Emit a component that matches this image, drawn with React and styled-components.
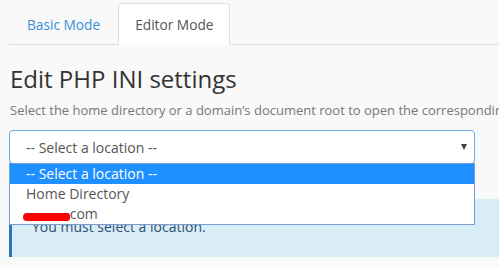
import React from "react";
import styled, { createGlobalStyle } from "styled-components";

const GlobalStyle = createGlobalStyle`
  html, body {
    margin: 0;
    padding: 0;
    background: #f9f9f9;
    font-family: "Open Sans", "Liberation Sans", sans-serif;
    overflow: hidden;
  }
`;

const Page = styled.div`
  width: 499px;
  height: 267px;
  padding-left: 9px;
  box-sizing: border-box;
  overflow: hidden;
`;

const Tabs = styled.div`
  display: flex;
  padding-top: 3px;
  border-bottom: 1px solid #ddd;
  margin-right: -20px;
`;

const Tab = styled.div`
  height: 42px;
  padding: 0 ${(p) => (p.active ? 16 : 17)}px;
  display: flex;
  align-items: center;
  font-size: 13.7px;
  box-sizing: border-box;
  margin-bottom: -1px;
  border: 1px solid ${(p) => (p.active ? "#ddd" : "transparent")};
  border-bottom-color: ${(p) => (p.active ? "#fff" : "transparent")};
  border-radius: 4px 4px 0 0;
  background: ${(p) => (p.active ? "#fff" : "transparent")};
  color: ${(p) => (p.active ? "#555" : "#3b8fd9")};
`;

const Title = styled.h1`
  margin: 16px 0 0 1px;
  font-size: 24px;
  font-weight: 400;
  color: #333;
  line-height: 36px;
`;

const Help = styled.p`
  margin: 3px 0 0 1px;
  font-size: 13px;
  color: #777;
  white-space: nowrap;
  line-height: 20px;
`;

const Field = styled.div`
  position: relative;
  margin-top: 10px;
  width: 466px;
`;

const Select = styled.div`
  height: 34px;
  box-sizing: border-box;
  border: 1px solid #66afe9;
  border-radius: 4px;
  background: #fff;
  display: flex;
  align-items: center;
  padding: 0 16px;
  font-size: 14px;
  color: #555;
  justify-content: space-between;
`;

const Arrow = styled.span`
  width: 0;
  height: 0;
  border-left: 3px solid transparent;
  border-right: 3px solid transparent;
  border-top: 6px solid #444;
  margin-right: -9px;
`;

const Menu = styled.ul`
  position: absolute;
  left: 0;
  top: 33px;
  width: 466px;
  box-sizing: border-box;
  margin: 0;
  padding: 0;
  list-style: none;
  background: #fff;
  border: 1px solid #7a9cd3;
  z-index: 2;
`;

const Option = styled.li`
  height: 20px;
  line-height: 20px;
  padding-left: 16px;
  font-size: 14px;
  background: ${(p) => (p.selected ? "#1e90ff" : "#fff")};
  color: ${(p) => (p.selected ? "#fff" : "#555")};
`;

const Redact = styled.span`
  display: inline-block;
  width: 47px;
  height: 8px;
  background: #ff0000;
  border-radius: 5px 3px 3px 5px;
  vertical-align: -2px;
  margin-left: -3px;
  margin-right: -4px;
  position: relative;
  z-index: 1;
`;

const Alert = styled.div`
  margin-top: 35px;
  height: 58px;
  margin-right: -20px;
  background: #d9edf7;
  border-left: 3px solid #2a7ab8;
  box-sizing: border-box;
  padding: 18px 0 0 20px;
  font-size: 14px;
  color: #31506f;
`;

export default function App() {
  return (
    <>
      <GlobalStyle />
      <Page>
        <Tabs>
          <Tab>Basic Mode</Tab>
          <Tab active>Editor Mode</Tab>
        </Tabs>
        <Title>Edit PHP INI settings</Title>
        <Help>
          Select the home directory or a domain’s document root to open the
          corresponding PHP INI file
        </Help>
        <Field>
          <Select>
            <span>-- Select a location --</span>
            <Arrow />
          </Select>
          <Menu>
            <Option selected>-- Select a location --</Option>
            <Option>Home Directory</Option>
            <Option>
              <Redact />
              .com
            </Option>
          </Menu>
        </Field>
        <Alert>You must select a location.</Alert>
      </Page>
    </>
  );
}
